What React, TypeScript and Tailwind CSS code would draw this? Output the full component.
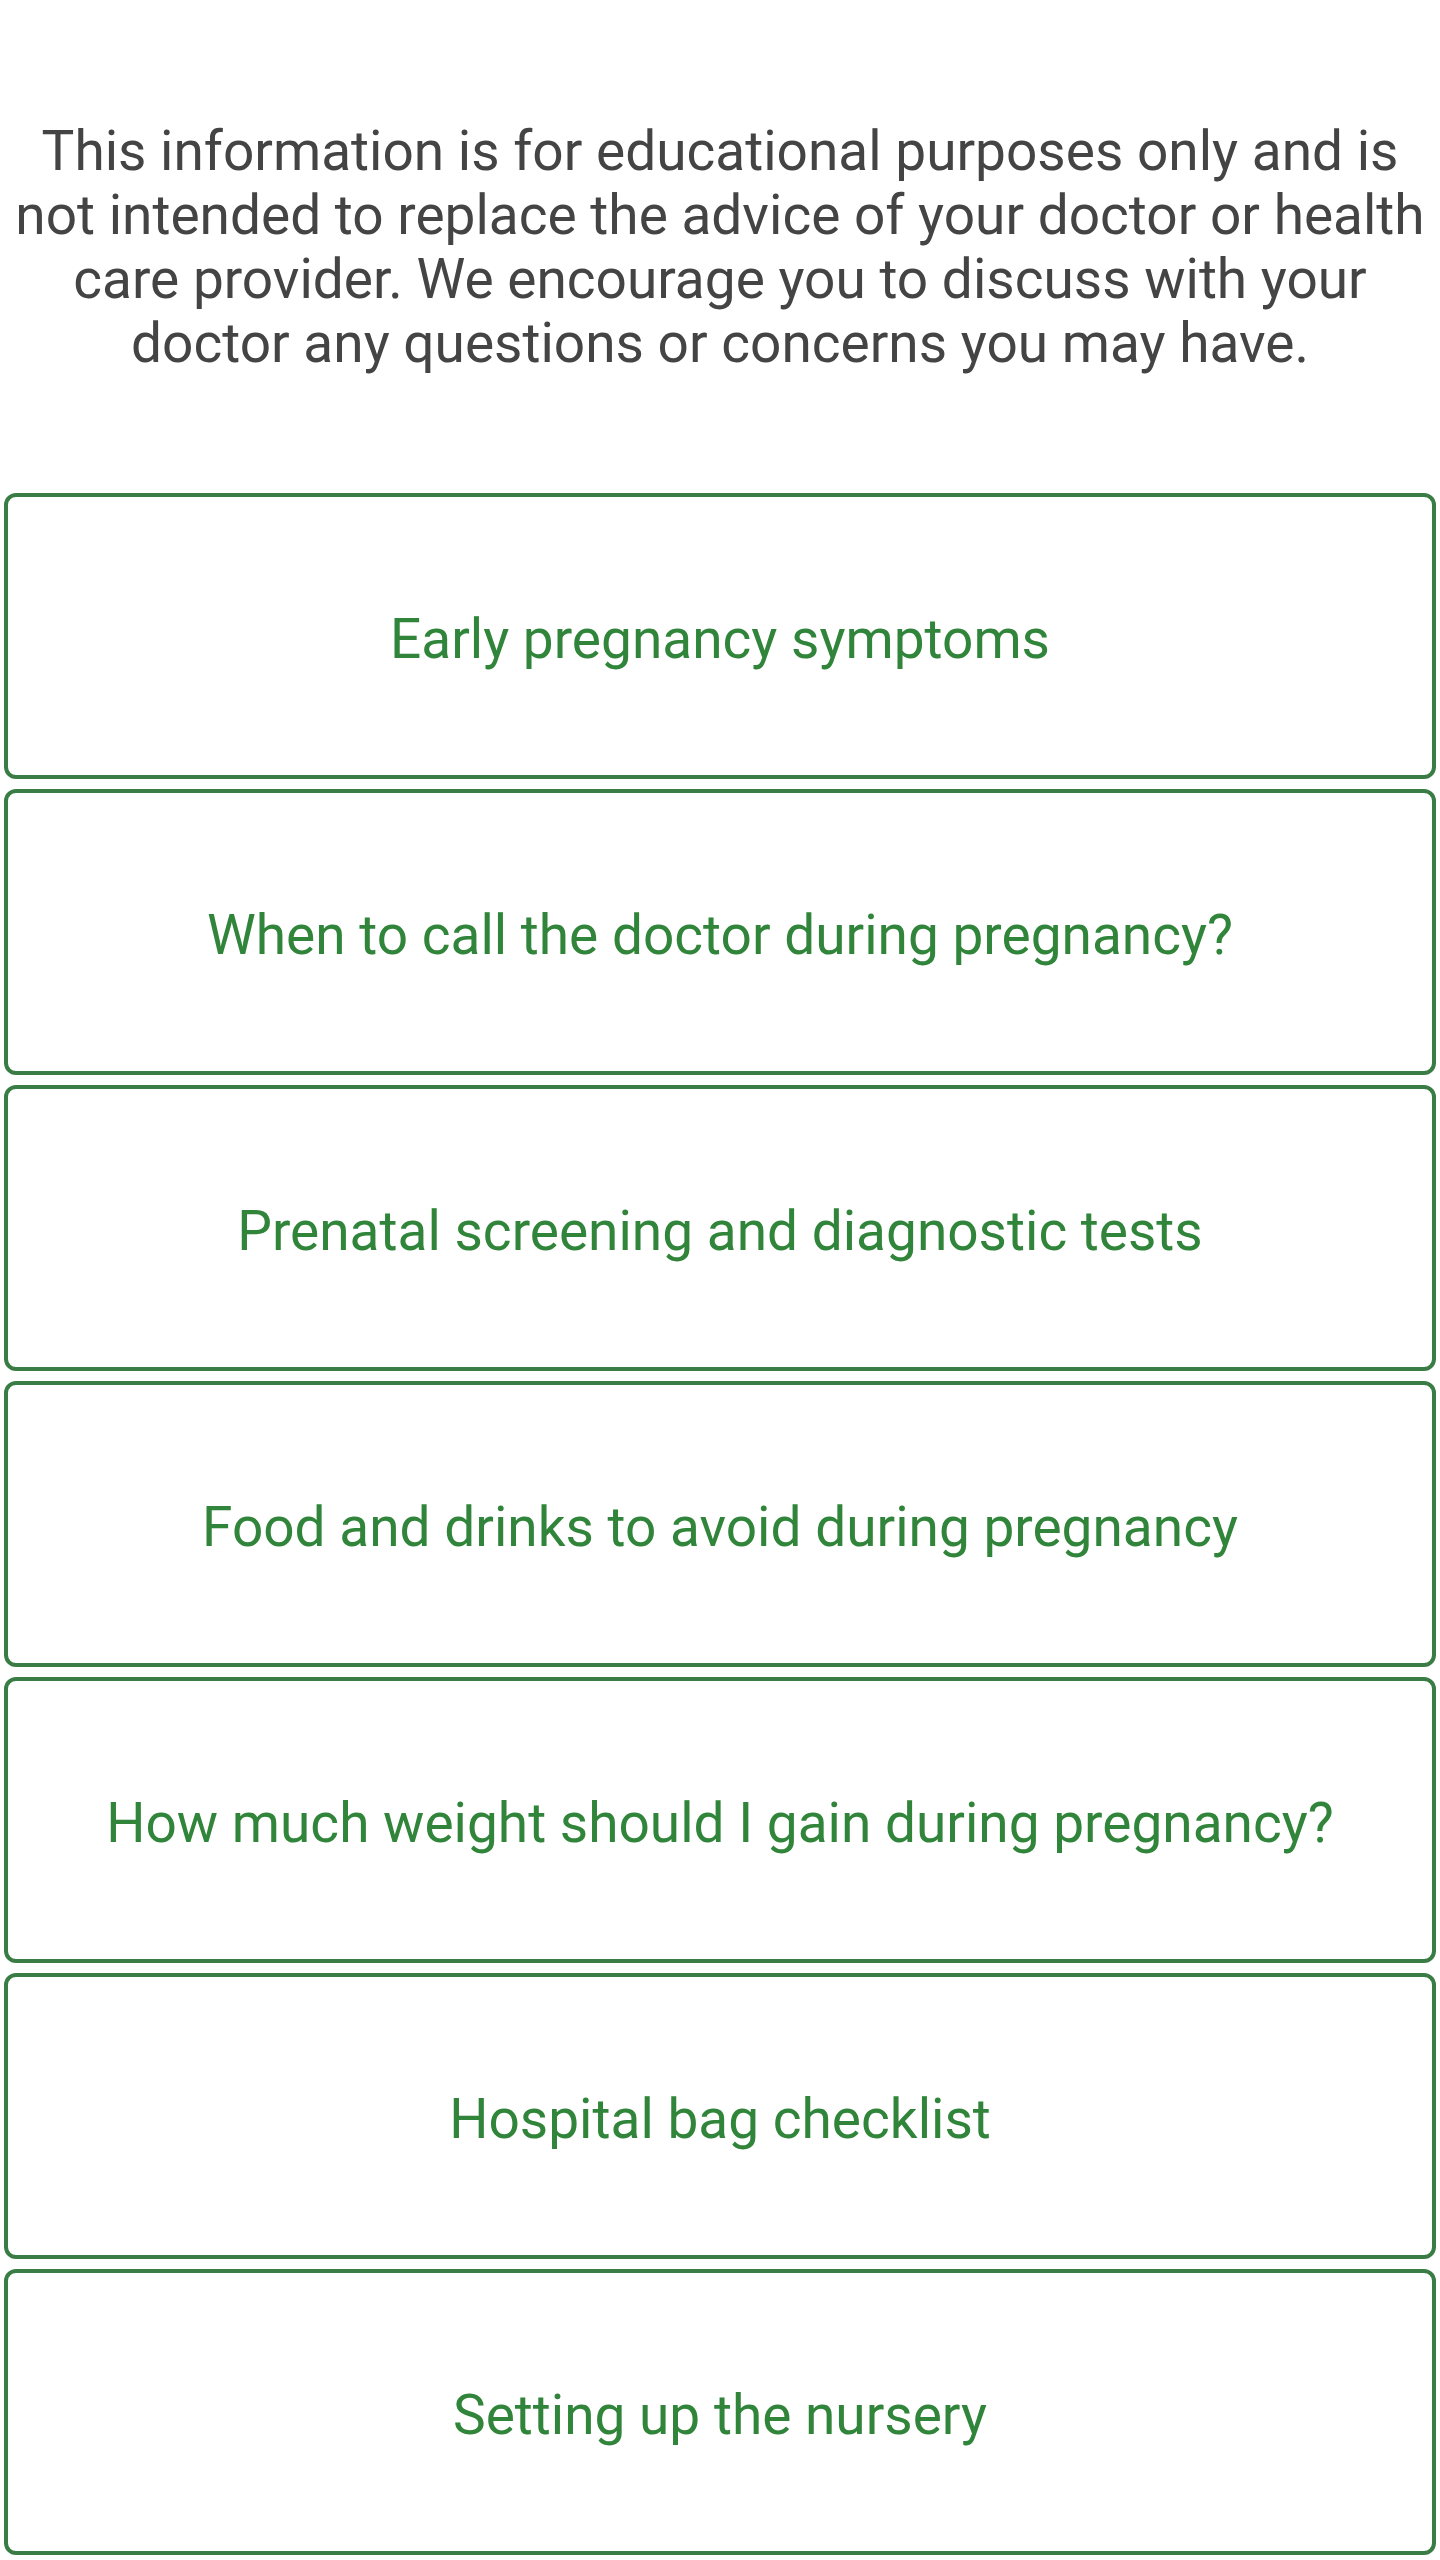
import React from "react";

const topics = [
  "Early pregnancy symptoms",
  "When to call the doctor during pregnancy?",
  "Prenatal screening and diagnostic tests",
  "Food and drinks to avoid during pregnancy",
  "How much weight should I gain during pregnancy?",
  "Hospital bag checklist",
  "Setting up the nursery",
];

export default function App() {
  return (
    <div className="min-h-[2560px] bg-white font-['Roboto',sans-serif]">
      <p className="px-[10px] pt-[119px] text-center text-[55px] leading-[64px] text-[#444444]">
        This information is for educational purposes only and is not intended to replace the advice of your
        doctor or health care provider. We encourage you to discuss with your doctor any questions or concerns
        you may have.
      </p>

      <div className="mt-[118px] flex flex-col gap-[10px] px-[4px]">
        {topics.map((topic) => (
          <button
            key={topic}
            className="flex h-[286px] w-full items-center justify-center rounded-[12px] border-[4px] border-[#3a7d44] bg-white pt-[6px] text-center text-[55px] text-[#31853b]"
          >
            {topic}
          </button>
        ))}
      </div>
    </div>
  );
}
